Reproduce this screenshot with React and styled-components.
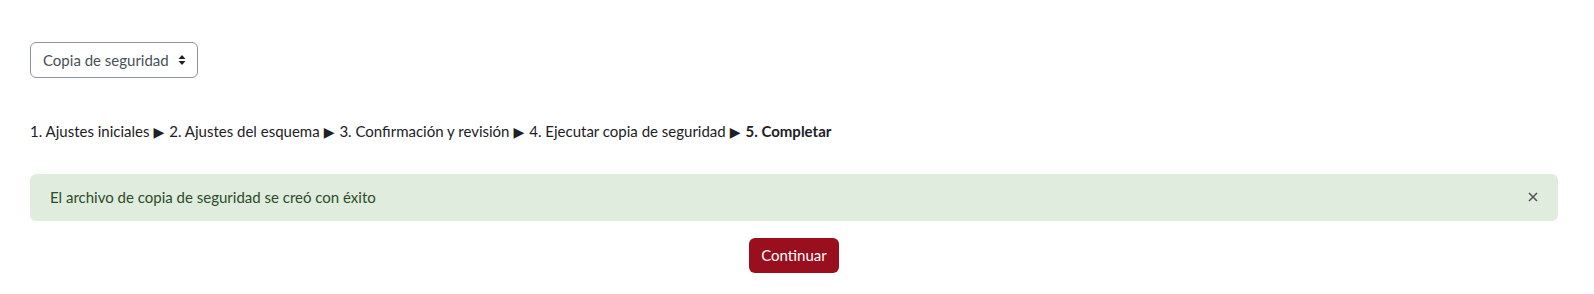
import React from 'react';
import styled, { createGlobalStyle } from 'styled-components';

const GlobalStyle = createGlobalStyle`
  body {
    margin: 0;
    background: #fff;
    font-family: Lato, "Helvetica Neue", Arial, sans-serif;
    font-size: 15px;
    line-height: 1.5;
    color: #1d2125;
  }
`;

const Page = styled.div`
  padding: 42px 36px 20px 30px;
`;

const SelectBox = styled.div`
  display: inline-flex;
  align-items: center;
  gap: 9px;
  height: 36px;
  box-sizing: border-box;
  padding: 0 11px 0 12px;
  border: 1px solid #8f959e;
  border-radius: 6px;
  color: #495057;
  font-size: 15px;
`;

const Steps = styled.div`
  margin-top: 42px;
  font-size: 15px;
  line-height: 22px;
  color: #1d2125;
`;

const Arrow = styled.span`
  display: inline-block;
  margin: 0 5px 0 4px;
  font-family: "DejaVu Sans", sans-serif;
  font-size: 14px;
  line-height: 1;
  color: #1d2125;
`;

const Current = styled.strong`
  font-weight: 700;
`;

const Alert = styled.div`
  margin-top: 32px;
  display: flex;
  align-items: center;
  justify-content: space-between;
  padding: 12px 20px;
  background: #e0ecdd;
  color: #2e4b2b;
  border-radius: 6px;
  line-height: 22.5px;
`;

const Close = styled.button`
  border: 0;
  background: none;
  padding: 0;
  color: #555;
  cursor: pointer;
  display: flex;
`;

const Actions = styled.div`
  display: flex;
  justify-content: center;
  margin-top: 17px;
`;

const Button = styled.button`
  background: #990f1d;
  color: #fff;
  border: 0;
  border-radius: 6px;
  padding: 6px 12px 7px;
  font-family: inherit;
  font-size: 15px;
  line-height: 22.5px;
`;

const Sorter = () => (
  <svg width="8" height="12" viewBox="0 0 8 12">
    <path d="M4 1 L7.5 5 H0.5 Z M4 11 L7.5 7 H0.5 Z" fill="#1d2125" />
  </svg>
);

const steps = [
  '1. Ajustes iniciales',
  '2. Ajustes del esquema',
  '3. Confirmación y revisión',
  '4. Ejecutar copia de seguridad',
];

export default function App() {
  return (
    <>
      <GlobalStyle />
      <Page>
        <SelectBox>
          Copia de seguridad
          <Sorter />
        </SelectBox>
        <Steps>
          {steps.map((s) => (
            <React.Fragment key={s}>
              {s}
              <Arrow>▶</Arrow>
            </React.Fragment>
          ))}
          <Current>5. Completar</Current>
        </Steps>
        <Alert>
          El archivo de copia de seguridad se creó con éxito
          <Close aria-label="Cerrar">
            <svg width="10" height="10" viewBox="0 0 10 10">
              <path d="M1 1 L9 9 M9 1 L1 9" stroke="#555" strokeWidth="1.6" />
            </svg>
          </Close>
        </Alert>
        <Actions>
          <Button>Continuar</Button>
        </Actions>
      </Page>
    </>
  );
}
